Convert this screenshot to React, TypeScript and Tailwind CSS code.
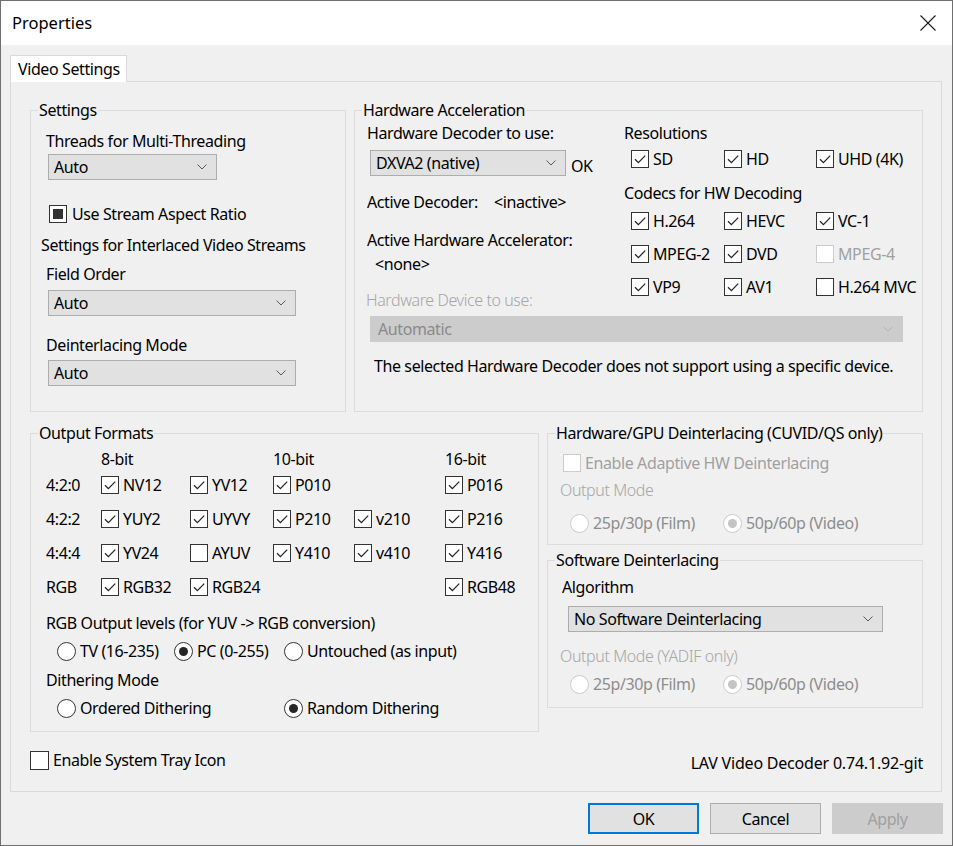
import React from 'react'

// Windows property-sheet style dialog for the LAV Video Decoder

function Check({ checked = false, disabled = false, mixed = false }: { checked?: boolean; disabled?: boolean; mixed?: boolean }) {
  return (
    <span
      className={`flex h-[18px] w-[18px] shrink-0 items-center justify-center border bg-white ${
        disabled ? 'border-[#cccccc]' : 'border-[#333333]'
      }`}
    >
      {checked && (
        <svg width="16" height="16" viewBox="0 0 16 16">
          <path d="M3 8.2 L6.4 11.6 L13.2 4.6" fill="none" stroke="#262626" strokeWidth="1.3" />
        </svg>
      )}
      {mixed && <span className="h-[10px] w-[10px] bg-[#333333]" />}
    </span>
  )
}

function CheckItem({ label, checked = false, disabled = false }: { label: string; checked?: boolean; disabled?: boolean }) {
  return (
    <div className="flex h-[20px] items-center gap-[4px]">
      <Check checked={checked} disabled={disabled} />
      <span className={disabled ? 'text-[#a0a0a0]' : 'text-black'}>{label}</span>
    </div>
  )
}

function Radio({ label, checked = false, disabled = false }: { label: string; checked?: boolean; disabled?: boolean }) {
  return (
    <div className="flex h-[20px] items-center gap-[4px]">
      <span
        className={`flex h-[19px] w-[19px] shrink-0 items-center justify-center rounded-full border bg-white ${
          disabled ? 'border-[#cccccc]' : 'border-[#333333]'
        }`}
      >
        {checked && <span className={`h-[9px] w-[9px] rounded-full ${disabled ? 'bg-[#c4c4c4]' : 'bg-[#262626]'}`} />}
      </span>
      <span className={disabled ? 'text-[#8d8d8d]' : 'text-black'}>{label}</span>
    </div>
  )
}

function Chevron({ color }: { color: string }) {
  return (
    <svg width="10" height="6" viewBox="0 0 10 6" className="shrink-0">
      <path d="M0.5 0.5 L5 5 L9.5 0.5" fill="none" stroke={color} strokeWidth="1" />
    </svg>
  )
}

function Select({ value, className, disabled = false }: { value: string; className: string; disabled?: boolean }) {
  return (
    <div
      className={`flex h-[26px] items-center justify-between border pl-[5px] pr-[9px] ${
        disabled ? 'border-[#cccccc] bg-[#cccccc] text-[#8a8a8a]' : 'border-[#adadad] bg-[#e1e1e1] text-black'
      } ${className}`}
    >
      <span>{value}</span>
      <Chevron color={disabled ? '#b4b4b4' : '#5a5a5a'} />
    </div>
  )
}

function Group({ title, className, children }: { title: string; className: string; children: React.ReactNode }) {
  return (
    <fieldset className={`border border-[#dcdcdc] ${className}`}>
      <legend className="ml-[7px] px-[1px] leading-[20px]">{title}</legend>
      {children}
    </fieldset>
  )
}

const Line = ({ children, className = '' }: { children: React.ReactNode; className?: string }) => (
  <div className={`h-[20px] leading-[20px] whitespace-nowrap ${className}`}>{children}</div>
)

const formatRows = [
  { label: '4:2:0', items: [['NV12', true], ['YV12', true], ['P010', true], null, ['P016', true]] },
  { label: '4:2:2', items: [['YUY2', true], ['UYVY', true], ['P210', true], ['v210', true], ['P216', true]] },
  { label: '4:4:4', items: [['YV24', true], ['AYUV', false], ['Y410', true], ['v410', true], ['Y416', true]] },
  { label: 'RGB', items: [['RGB32', true], ['RGB24', true], null, null, ['RGB48', true]] },
] as const

export default function App() {
  return (
    <div className="flex h-[846px] w-[953px] flex-col overflow-hidden border border-[#6f6f6f] bg-[#f0f0f0] font-['Noto_Sans',sans-serif] text-[16px] tracking-[-0.4px] text-black">
      {/* Title bar */}
      <div className="flex h-[44px] shrink-0 items-center justify-between bg-white pl-[11px] pr-[16px]">
        <span className="text-[16.5px] tracking-normal">Properties</span>
        <svg width="16" height="16" viewBox="0 0 16 16">
          <path d="M0.5 0.5 L15.5 15.5 M15.5 0.5 L0.5 15.5" stroke="#1a1a1a" strokeWidth="1.1" />
        </svg>
      </div>

      {/* Tab */}
      <div className="ml-[9px] mt-[10px] flex">
        <div className="relative z-10 -mb-px flex h-[27px] w-[117px] items-center border border-b-0 border-[#d9d9d9] bg-white pl-[7px]">
          Video Settings
        </div>
      </div>

      {/* Tab page */}
      <div className="ml-[9px] flex h-[711px] w-[932px] flex-col border border-[#d9d9d9] bg-[#f0f0f0] pl-[19px] pt-[18px]">
        {/* Row 1 */}
        <div className="flex gap-[8px]">
          <Group title="Settings" className="h-[312px] w-[316px]">
            <div className="flex flex-col pl-[15px] pt-[11px]">
              <Line>Threads for Multi-Threading</Line>
              <Select value="Auto" className="ml-[2px] mt-[3px] w-[169px]" />
              <div className="ml-[3px] mt-[24px] flex h-[20px] items-center gap-[5px]">
                <Check mixed />
                <span>Use Stream Aspect Ratio</span>
              </div>
              <Line className="-ml-[5px] mt-[11px]">Settings for Interlaced Video Streams</Line>
              <Line className="mt-[9px]">Field Order</Line>
              <Select value="Auto" className="ml-[2px] mt-[6px] w-[248px]" />
              <Line className="mt-[19px]">Deinterlacing Mode</Line>
              <Select value="Auto" className="ml-[2px] mt-[5px] w-[248px]" />
            </div>
          </Group>

          <Group title="Hardware Acceleration" className="h-[312px] w-[569px]">
            <div className="flex flex-col">
              <div className="grid h-[177px] grid-cols-[269px_1fr]">
                <div className="flex flex-col pl-[12px] pt-[3px]">
                  <Line>Hardware Decoder to use:</Line>
                  <div className="mt-[7px] flex items-end">
                    <Select value="DXVA2 (native)" className="ml-[3px] w-[196px]" />
                    <Line className="ml-[5px]">OK</Line>
                  </div>
                  <Line className="mt-[16px] flex">
                    <span className="w-[127px]">Active Decoder:</span>
                    <span>&lt;inactive&gt;</span>
                  </Line>
                  <Line className="mt-[18px]">Active Hardware Accelerator:</Line>
                  <Line className="mt-[4px] pl-[8px]">&lt;none&gt;</Line>
                </div>
                <div className="flex flex-col pt-[3px]">
                  <Line>Resolutions</Line>
                  <div className="mt-[6px] grid grid-cols-[93px_92px_1fr] pl-[7px]">
                    <CheckItem label="SD" checked />
                    <CheckItem label="HD" checked />
                    <CheckItem label="UHD (4K)" checked />
                  </div>
                  <Line className="mt-[14px]">Codecs for HW Decoding</Line>
                  <div className="mt-[8px] grid grid-cols-[93px_92px_1fr] gap-y-[13px] pl-[7px]">
                    <CheckItem label="H.264" checked />
                    <CheckItem label="HEVC" checked />
                    <CheckItem label="VC-1" checked />
                    <CheckItem label="MPEG-2" checked />
                    <CheckItem label="DVD" checked />
                    <CheckItem label="MPEG-4" disabled />
                    <CheckItem label="VP9" checked />
                    <CheckItem label="AV1" checked />
                    <CheckItem label="H.264 MVC" />
                  </div>
                </div>
              </div>
              <Line className="-mt-[7px] pl-[11px] font-light text-[#a6a6a6]">Hardware Device to use:</Line>
              <Select value="Automatic" disabled className="ml-[15px] mt-[6px] w-[533px] pl-[7px]" />
              <Line className="mt-[14px] pl-[19px]">
                The selected Hardware Decoder does not support using a specific device.
              </Line>
            </div>
          </Group>
        </div>

        {/* Row 2 */}
        <div className="mt-[11px] flex gap-[8px]">
          <Group title="Output Formats" className="h-[309px] w-[509px]">
            <div className="flex flex-col pl-[15px] pt-[6px]">
              <div className="grid grid-cols-[55px_89px_83px_81px_91px_1fr]">
                <span />
                <Line>8-bit</Line>
                <span />
                <Line>10-bit</Line>
                <span />
                <Line>16-bit</Line>
              </div>
              <div className="mt-[6px] grid grid-cols-[55px_89px_83px_81px_91px_1fr] gap-y-[14px]">
                {formatRows.map((row) => (
                  <React.Fragment key={row.label}>
                    <Line>{row.label}</Line>
                    {row.items.map((item, i) =>
                      item ? <CheckItem key={i} label={item[0]} checked={item[1]} /> : <span key={i} />
                    )}
                  </React.Fragment>
                ))}
              </div>
              <Line className="mt-[16px]">RGB Output levels (for YUV -&gt; RGB conversion)</Line>
              <div className="ml-[11px] mt-[8px] grid grid-cols-[117px_110px_1fr]">
                <Radio label="TV (16-235)" />
                <Radio label="PC (0-255)" checked />
                <Radio label="Untouched (as input)" />
              </div>
              <Line className="mt-[9px]">Dithering Mode</Line>
              <div className="ml-[11px] mt-[8px] grid grid-cols-[227px_1fr]">
                <Radio label="Ordered Dithering" />
                <Radio label="Random Dithering" checked />
              </div>
            </div>
          </Group>

          <div className="flex w-[376px] flex-col gap-[5px]">
            <Group title="Hardware/GPU Deinterlacing (CUVID/QS only)" className="h-[122px] w-[376px]">
              <div className="flex flex-col pt-[10px]">
                <div className="ml-[15px]">
                  <CheckItem label="Enable Adaptive HW Deinterlacing" disabled />
                </div>
                <Line className="mt-[7px] pl-[12px] font-light text-[#a6a6a6]">Output Mode</Line>
                <div className="ml-[22px] mt-[13px] grid grid-cols-[153px_1fr]">
                  <Radio label="25p/30p (Film)" disabled />
                  <Radio label="50p/60p (Video)" checked disabled />
                </div>
              </div>
            </Group>
            <Group title="Software Deinterlacing" className="h-[158px] w-[376px]">
              <div className="flex flex-col pt-[7px]">
                <Line className="pl-[14px]">Algorithm</Line>
                <Select value="No Software Deinterlacing" className="ml-[20px] mt-[9px] w-[315px]" />
                <Line className="mt-[14px] pl-[12px] font-light text-[#a6a6a6]">Output Mode (YADIF only)</Line>
                <div className="ml-[22px] mt-[8px] grid grid-cols-[153px_1fr]">
                  <Radio label="25p/30p (Film)" disabled />
                  <Radio label="50p/60p (Video)" checked disabled />
                </div>
              </div>
            </Group>
          </div>
        </div>

        {/* Bottom row */}
        <div className="mt-[18px] flex w-[893px] items-start justify-between">
          <div className="flex h-[20px] items-center gap-[4px]">
            <span className="h-[19px] w-[19px] border border-[#333333] bg-white" />
            <span>Enable System Tray Icon</span>
          </div>
          <Line className="mt-[3px] tracking-[-0.2px]">LAV Video Decoder 0.74.1.92-git</Line>
        </div>
      </div>

      {/* Buttons */}
      <div className="ml-[587px] mt-[11px] flex gap-[11px]">
        <button className="h-[31px] w-[111px] border-2 border-[#0078d7] bg-[#e1e1e1]">OK</button>
        <button className="h-[31px] w-[111px] border border-[#adadad] bg-[#e1e1e1]">Cancel</button>
        <button className="h-[31px] w-[111px] border border-[#cccccc] bg-[#cccccc] text-[#a0a0a0]">Apply</button>
      </div>
    </div>
  )
}
